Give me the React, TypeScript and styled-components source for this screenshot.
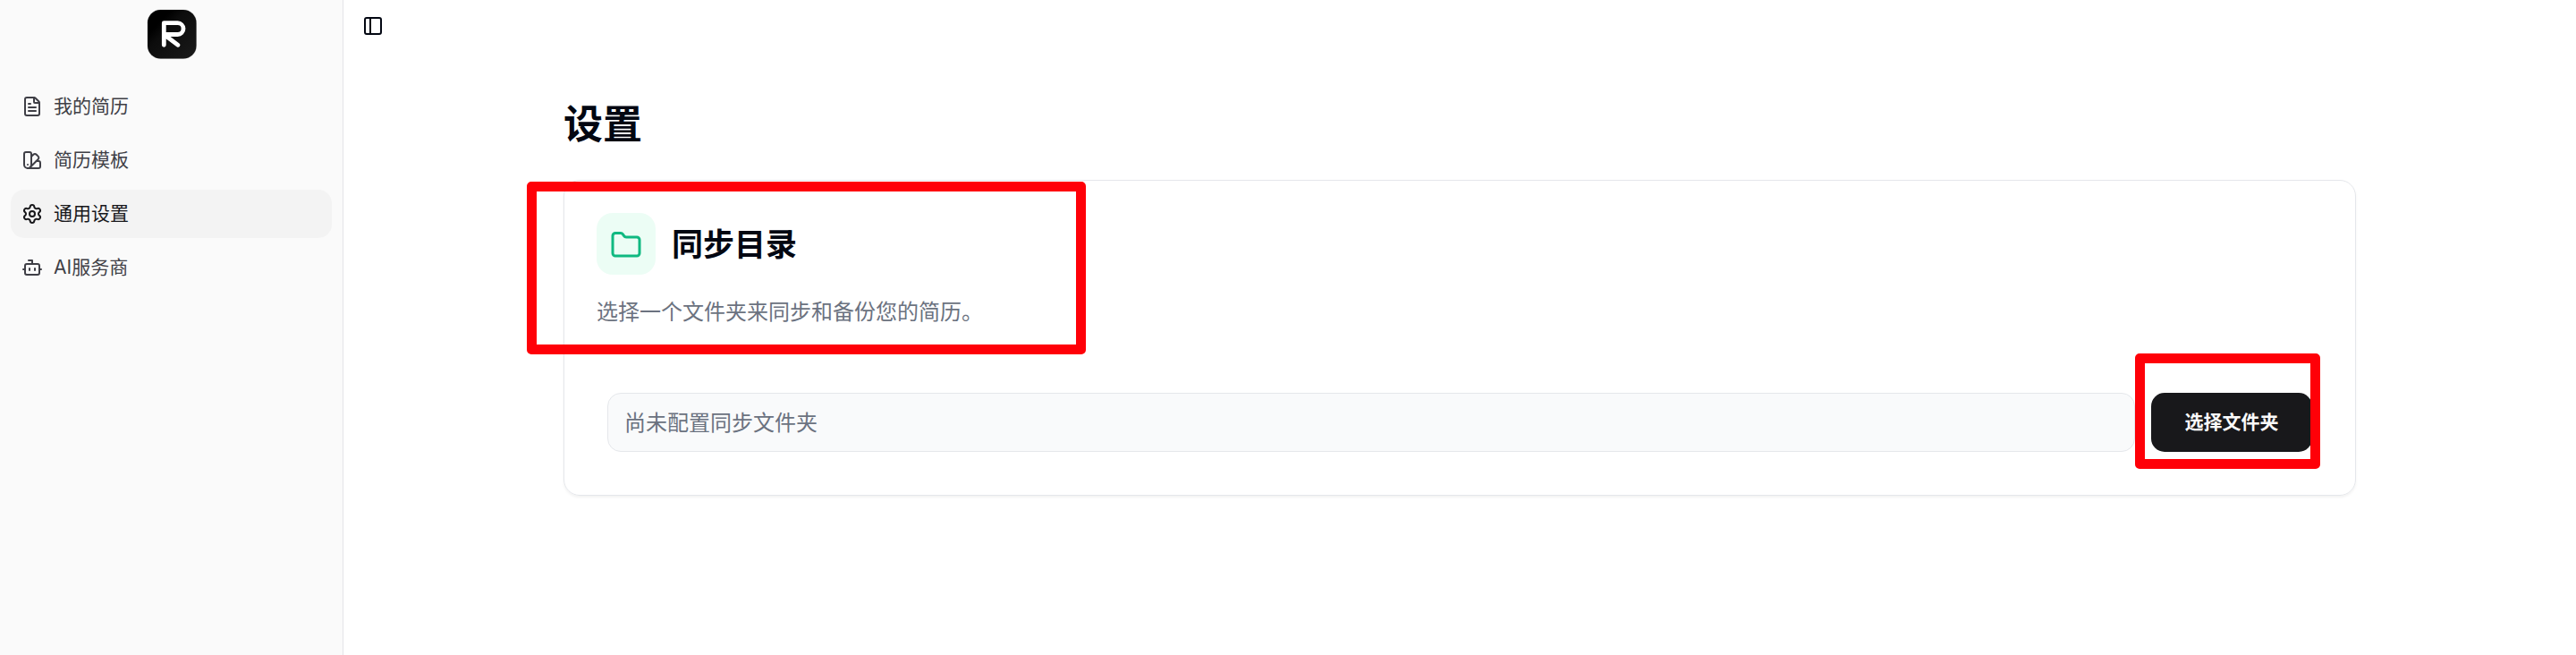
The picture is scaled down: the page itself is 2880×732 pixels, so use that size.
import React from "react";
import styled, { createGlobalStyle } from "styled-components";
import { Bot, FileText, Folder, PanelLeft, Settings, SwatchBook } from "lucide-react";

const GlobalStyle = createGlobalStyle`
  *, *::before, *::after { box-sizing: border-box; }
  body {
    margin: 0;
    background: #ffffff;
    color: #030712;
    font-family: Inter, "Noto Sans CJK SC", sans-serif;
    font-size: 24px;
    line-height: 36px;
  }
  h1, h2, p, ul { margin: 0; padding: 0; }
  button, input { font: inherit; }
`;

const Shell = styled.div`
  display: flex;
  min-height: 100vh;
`;

const Sidebar = styled.aside`
  flex: 0 0 384px;
  border-right: 1px solid #e4e4e7;
  background: #fafafa;
`;

const Brand = styled.a`
  display: flex;
  justify-content: center;
  padding: 8px 0 24px;
`;

const NavList = styled.ul`
  display: flex;
  flex-direction: column;
  gap: 6px;
  padding: 0 12px;
  list-style: none;
`;

const NavLink = styled.a<{ $active?: boolean }>`
  display: flex;
  align-items: center;
  gap: 12px;
  height: 54px;
  padding: 0 12px;
  border-radius: 15px;
  background: ${(p) => (p.$active ? "#f3f3f3" : "transparent")};
  color: ${(p) => (p.$active ? "#18181b" : "#3f3f46")};
  font-size: 21px;
  text-decoration: none;
`;

const Main = styled.main`
  flex: 1;
  min-width: 0;
`;

const TopBar = styled.header`
  display: flex;
  align-items: center;
  height: 58px;
  padding: 0 12px;
`;

const IconButton = styled.button`
  display: flex;
  align-items: center;
  justify-content: center;
  width: 42px;
  height: 42px;
  padding: 0;
  border: 0;
  border-radius: 9px;
  background: transparent;
  color: #030712;
`;

const Content = styled.div`
  max-width: 2100px;
  margin: 0 auto;
  padding: 54px 48px;
`;

const PageTitle = styled.h1`
  margin-bottom: 35px;
  font-size: 44px;
  line-height: 54px;
  font-weight: 700;
`;

const Card = styled.section`
  padding: 36px;
  border: 1px solid #e5e7eb;
  border-radius: 18px;
  box-shadow: 0 2px 3px rgba(0, 0, 0, 0.05);
`;

const CardHeader = styled.div`
  position: relative;
`;

const CardTitle = styled.h2`
  display: flex;
  align-items: center;
  gap: 18px;
  margin-bottom: 24px;
  font-size: 35px;
  line-height: 54px;
  font-weight: 600;
`;

const IconTile = styled.span`
  display: flex;
  align-items: center;
  justify-content: center;
  padding: 18px 15px 15px;
  border-radius: 18px;
  background: #ecfdf5;
  color: #10b981;
`;

const Description = styled.p`
  color: #6b7280;
`;

const FolderRow = styled.div`
  display: flex;
  gap: 18px;
  padding: 72px 12px 12px;
`;

const PathInput = styled.input`
  flex: 1;
  min-width: 0;
  height: 66px;
  padding: 0 18px 3px;
  border: 1px solid #e5e7eb;
  border-radius: 15px;
  background: #f9fafb;
  color: #6b7280;
`;

const ButtonSlot = styled.div`
  position: relative;
`;

const PrimaryButton = styled.button`
  min-width: 180px;
  height: 66px;
  padding: 0 36px;
  border: 0;
  border-radius: 15px;
  background: #18181b;
  color: #fafafa;
  font-size: 21px;
  font-weight: 600;
`;

const Highlight = styled.span`
  position: absolute;
  border: 11px solid #ff0008;
  border-radius: 5px;
  pointer-events: none;
`;

const HeaderHighlight = styled(Highlight)`
  top: -35px;
  left: -78px;
  width: 625px;
  height: 193px;
`;

const ButtonHighlight = styled(Highlight)`
  top: -44px;
  right: -9px;
  width: 207px;
  height: 129px;
`;

const Logo = () => (
  <svg width="60" height="60" viewBox="0 0 60 60" role="img" aria-label="R">
    <defs>
      <linearGradient id="logo-fill" x1="0" y1="0" x2="1" y2="1">
        <stop offset="0.25" stopColor="#000000" />
        <stop offset="0.4" stopColor="#0c0c0c" />
        <stop offset="1" stopColor="#1a1a1a" />
      </linearGradient>
    </defs>
    <rect x="2.5" y="2.5" width="55.5" height="55.5" rx="15" fill="#d0d0d0" />
    <rect x="3" y="3" width="54.5" height="54.5" rx="14.500" fill="url(#logo-fill)" />
    <path
      d="M21.300 42.300V17.700H36.600A6.400 6.400 0 0 1 36.600 30.500H21.300L37 42.300"
      fill="none"
      stroke="#ffffff"
      strokeWidth="4.800"
      strokeLinecap="round"
      strokeLinejoin="round"
    />
  </svg>
);

const navItems = [
  { label: "我的简历", icon: FileText },
  { label: "简历模板", icon: SwatchBook },
  { label: "通用设置", icon: Settings, active: true },
  { label: "AI服务商", icon: Bot },
];

export default function App() {
  return (
    <>
      <GlobalStyle />
      <Shell>
        <Sidebar>
          <Brand href="#">
            <Logo />
          </Brand>
          <nav>
            <NavList>
              {navItems.map(({ label, icon: Icon, active }) => (
                <li key={label}>
                  <NavLink href="#" $active={active} aria-current={active ? "page" : undefined}>
                    <Icon size={24} />
                    {label}
                  </NavLink>
                </li>
              ))}
            </NavList>
          </nav>
        </Sidebar>
        <Main>
          <TopBar>
            <IconButton type="button" aria-label="切换侧边栏">
              <PanelLeft size={24} />
            </IconButton>
          </TopBar>
          <Content>
            <PageTitle>设置</PageTitle>
            <Card>
              <CardHeader>
                <CardTitle>
                  <IconTile>
                    <Folder size={36} />
                  </IconTile>
                  同步目录
                </CardTitle>
                <Description>选择一个文件夹来同步和备份您的简历。</Description>
                <HeaderHighlight />
              </CardHeader>
              <FolderRow>
                <PathInput aria-label="同步目录" readOnly value="尚未配置同步文件夹" />
                <ButtonSlot>
                  <PrimaryButton type="button">选择文件夹</PrimaryButton>
                  <ButtonHighlight />
                </ButtonSlot>
              </FolderRow>
            </Card>
          </Content>
        </Main>
      </Shell>
    </>
  );
}
